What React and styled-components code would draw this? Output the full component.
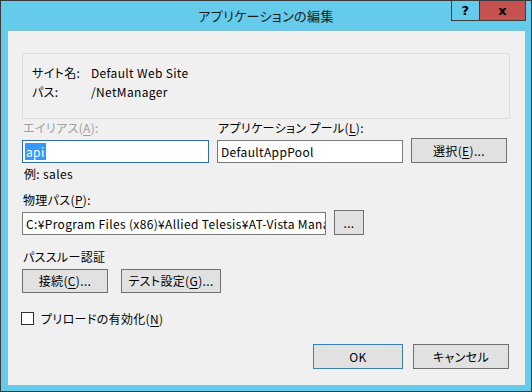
import React from 'react';
import styled, { createGlobalStyle } from 'styled-components';

const GlobalStyle = createGlobalStyle`
    html, body {
        margin: 0;
        padding: 0;
        background: #65cbea;
    }
    body {
        font-family: "Noto Sans CJK JP", "Noto Sans", sans-serif;
        font-size: 12px;
        letter-spacing: 0.35px;
        font-feature-settings: "palt";
        color: #000;
    }
`;

const Frame = styled.div`
    width: 532px;
    height: 392px;
    box-sizing: border-box;
    border: 1px solid #3b3b3b;
    background: #65cbea;
    display: flex;
    flex-direction: column;
`;

const TitleBar = styled.div`
    height: 29px;
    display: flex;
    position: relative;
    justify-content: center;
    align-items: center;
`;

const Title = styled.span`
    font-size: 13px;
    letter-spacing: 0.4px;
    color: #1a1a1a;
    margin-top: -1px;
`;

const Controls = styled.div`
    position: absolute;
    top: -1px;
    right: 5px;
    display: flex;
`;

const CtrlButton = styled.div`
    height: 21px;
    width: ${p => p.$w}px;
    box-sizing: border-box;
    border: 1px solid #3b3b3b;
    border-left-width: ${p => (p.$first ? 1 : 0)}px;
    background: ${p => p.$bg};
    display: flex;
    align-items: center;
    justify-content: center;
    font-family: "DejaVu Sans", sans-serif;
    font-weight: bold;
    font-size: 13px;
    color: #000;
`;

const Client = styled.div`
    flex: 1;
    margin: 0 6px 6px 6px;
    background: #f0f0f0;
    border: 1px solid #7fbfd9;
    border-bottom: none;
    border-right: none;
    display: flex;
    flex-direction: column;
    padding: 22px 15px 0 14px;
`;

const InfoBox = styled.div`
    height: 55px;
    border: 1px solid #dcdcdc;
    border-radius: 2px;
    padding: 9px 0 0 9px;
    display: grid;
    grid-template-columns: 59px auto;
    grid-auto-rows: 19px;
    align-content: start;
    line-height: 19px;
`;

const FieldRow = styled.div`
    display: flex;
    align-items: flex-end;
    gap: ${p => p.$gap || 8}px;
    margin-top: ${p => p.$mt || 0}px;
`;

const Field = styled.div`
    display: flex;
    flex-direction: column;
    width: ${p => p.$w}px;
`;

const Label = styled.div`
    line-height: 16px;
    margin-bottom: 4px;
    padding-left: 1px;
    color: ${p => (p.$disabled ? '#a0a0a0' : '#000')};
    margin-top: ${p => p.$mt || 0}px;
`;

const Mn = styled.span`
    text-decoration: underline;
    text-underline-offset: 2px;
`;

const TextBox = styled.div`
    height: 23px;
    box-sizing: border-box;
    border: 1px solid ${p => (p.$focus ? '#2f6ca3' : '#7a7a7a')};
    background: #fff;
    padding: 0 3px;
    line-height: 21px;
    white-space: nowrap;
    overflow: hidden;
`;

const Selected = styled.span`
    background: #3399ff;
    color: #fff;
    padding: 0 1px;
    margin-left: -1px;
`;

const Button = styled.div`
    width: ${p => p.$w}px;
    height: ${p => p.$h || 25}px;
    box-sizing: border-box;
    border: 1px solid ${p => (p.$default ? '#3c7fb1' : '#707070')};
    background: #e1e1e1;
    display: flex;
    align-items: center;
    justify-content: center;
    line-height: 16px;
    flex-shrink: 0;
`;

const Hint = styled.div`
    margin-top: 3px;
    line-height: 16px;
    padding-left: 2px;
`;

const CheckRow = styled.div`
    display: flex;
    align-items: center;
    gap: 7px;
    margin-top: 17px;
    margin-left: -1px;
`;

const Box = styled.div`
    width: 13px;
    height: 13px;
    box-sizing: border-box;
    border: 1px solid #333;
    background: #fff;
`;

const Footer = styled.div`
    display: flex;
    justify-content: flex-end;
    gap: 10px;
    margin-top: 17px;
    padding-right: 1px;
`;

export default function App() {
    return (
        <>
            <GlobalStyle />
            <Frame>
                <TitleBar>
                    <Title>アプリケーションの編集</Title>
                    <Controls>
                        <CtrlButton $w={29} $first $bg="#65cbea">?</CtrlButton>
                        <CtrlButton $w={46} $bg="#c75050">x</CtrlButton>
                    </Controls>
                </TitleBar>
                <Client>
                    <InfoBox>
                        <span>サイト名:</span>
                        <span>Default Web Site</span>
                        <span>パス:</span>
                        <span>/NetManager</span>
                    </InfoBox>

                    <FieldRow $mt={1}>
                        <Field $w={187}>
                            <Label $disabled>エイリアス(<Mn>A</Mn>):</Label>
                            <TextBox $focus><Selected>api</Selected></TextBox>
                        </Field>
                        <Field $w={186}>
                            <Label>アプリケーション プール(<Mn>L</Mn>):</Label>
                            <TextBox>DefaultAppPool</TextBox>
                        </Field>
                        <Button $w={96}>選択(<Mn>E</Mn>)...</Button>
                    </FieldRow>
                    <Hint>例: sales</Hint>

                    <FieldRow $mt={10}>
                        <Field $w={304}>
                            <Label>物理パス(<Mn>P</Mn>):</Label>
                            <TextBox>C:¥Program Files (x86)¥Allied Telesis¥AT-Vista Manager</TextBox>
                        </Field>
                        <Button $w={30}>...</Button>
                    </FieldRow>

                    <Label $mt={14}>パススルー認証</Label>
                    <FieldRow $gap={13}>
                        <Button $w={86} $h={24}>接続(<Mn>C</Mn>)...</Button>
                        <Button $w={100} $h={24}>テスト設定(<Mn>G</Mn>)...</Button>
                    </FieldRow>

                    <CheckRow>
                        <Box />
                        <span>プリロードの有効化(<Mn>N</Mn>)</span>
                    </CheckRow>

                    <Footer>
                        <Button $w={90} $default>OK</Button>
                        <Button $w={96}>キャンセル</Button>
                    </Footer>
                </Client>
            </Frame>
        </>
    );
}
